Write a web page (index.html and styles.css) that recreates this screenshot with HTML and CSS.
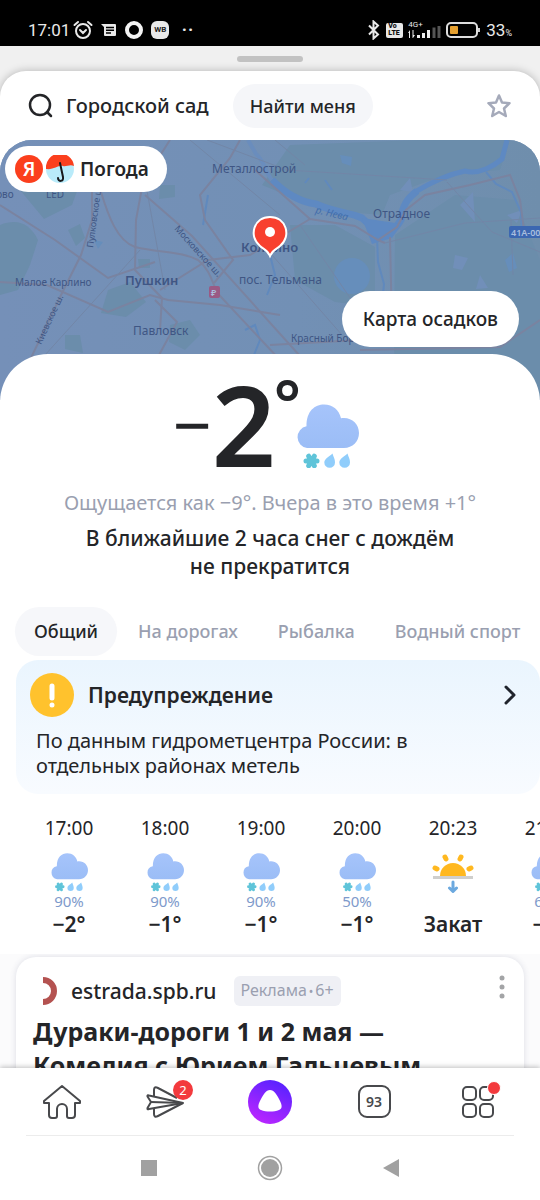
FILE: index.html
```html
<!DOCTYPE html>
<html lang="ru">
<head>
    <meta charset="UTF-8">
    <meta name="viewport" content="width=device-width, initial-scale=1.0">
    <title>Погода</title>
    <link rel="stylesheet" href="styles.css">
</head>
<body>
    <svg class="defs" aria-hidden="true">
        <defs>
            <linearGradient id="cloudFill" x1="0" y1="0" x2="0" y2="1">
                <stop offset="0" stop-color="#a6c4fb"/>
                <stop offset="1" stop-color="#9bbdf6"/>
            </linearGradient>
        </defs>
        <symbol id="sleet" viewBox="0 0 64 64">
            <path fill="url(#cloudFill)" d="M12 44A11 11 0 0 1 11.500 22.300C11.400 7 20 .600 29 .600C38 .600 44 6 46 14.200C56 12.500 64 19.500 64 29C64 37.500 57.500 44 49 44Z"/>
            <g stroke="#5fc4d9" stroke-width="5" stroke-linecap="round">
                <path d="M11 57H22M13.700 52.200L19.300 61.800M19.300 52.200L13.700 61.800"/>
            </g>
            <g fill="#90cdfb">
                <path d="M37.500 49.500C38.500 53 40 55 40 58.500A5.300 5.300 0 0 1 29.300 58.500C29.500 54.500 34 53 37.500 49.500Z"/>
                <path d="M52.500 49.500C53.500 53 55 55 55 58.500A5.300 5.300 0 0 1 44.300 58.500C44.500 54.500 49 53 52.500 49.500Z"/>
            </g>
        </symbol>
    </svg>

    <div class="app">
        <div class="status-bar">
            <div class="status-left">
                <span class="clock">17:01</span>
                <svg width="20" height="20" viewBox="0 0 20 20" fill="none" stroke="#e9e9e9" stroke-width="2" stroke-linecap="round">
                    <circle cx="10" cy="11" r="7"/>
                    <path d="M7 10l3 3 3-3M1.500 5L5 2M18.500 5L15 2"/>
                </svg>
                <svg width="16" height="16" viewBox="0 0 16 16">
                    <path fill="#e9e9e9" d="M0 2h14q1 0 1 1v10q0 1-1 1H4q-1 0-1-1V5z"/>
                    <path stroke="#000" stroke-width="1.500" d="M5 5.500h8M5 8.300h8M5 11h5"/>
                </svg>
                <svg width="18" height="18" viewBox="0 0 18 18"><circle cx="9" cy="9" r="7" fill="none" stroke="#f4f4f4" stroke-width="4"/></svg>
                <span class="wb">WB</span>
                <span class="more">··</span>
            </div>
            <div class="status-right">
                <svg width="14" height="20" viewBox="0 0 14 20" fill="none" stroke="#e9e9e9" stroke-width="2">
                    <path d="M2 5.500l9 9-4.500 4V1.500l4.500 4-9 9"/>
                </svg>
                <span class="volte">Vo<br>LTE</span>
                <div class="network">
                    <span>4G+</span>
                    <svg width="33" height="12" viewBox="0 0 33 12">
                        <path fill="#eee" d="M0 7l2-3v8H1V7zM4.500 4h1v5H7l-2 3h-.500zM9 9h3v3H9zM14 7h3v5h-3zM19 4h3v8h-3z"/>
                        <path fill="#555" d="M24.500 1.500h3V12h-3zM29.500 0h3v12h-3z"/>
                    </svg>
                </div>
                <svg width="35" height="16" viewBox="0 0 35 16">
                    <rect x="1" y="1" width="30" height="14" rx="4" fill="none" stroke="#ddd" stroke-width="2"/>
                    <rect x="4" y="4" width="8" height="8" rx="1" fill="#e6a02f"/>
                    <rect x="32" y="6" width="2" height="4" fill="#ccc"/>
                </svg>
                <span class="percent">33<small>%</small></span>
            </div>
        </div>

        <div class="handle"></div>

        <main class="sheet">
            <header class="search">
                <a class="place" href="#">
                    <svg width="26" height="26" viewBox="0 0 26 26" fill="none" stroke="#242528" stroke-width="2.500" stroke-linecap="round">
                        <circle cx="12" cy="12" r="10"/>
                        <path d="M19 19l4 4"/>
                    </svg>
                    Городской сад
                </a>
                <button class="find-me" type="button">Найти меня</button>
                <button class="favorite" type="button" aria-label="В избранное">
                    <svg width="26" height="26" viewBox="0 0 26 26" fill="none" stroke="#a5aaba" stroke-width="2.500" stroke-linejoin="round">
                        <path d="M13 2.500l3 7 7.500.700-5.500 5.300 1.800 7.500L13 19l-6.800 4L8 15.500 2.500 10.200 10 9.500z"/>
                    </svg>
                </button>
            </header>

            <section class="map">
                <svg class="map-canvas" viewBox="0 0 540 260" preserveAspectRatio="xMidYMin slice">
                    <defs>
                        <linearGradient id="mapShade" x1="0" y1="0" x2="1" y2="0">
                            <stop offset="0" stop-color="#7590b8"/>
                            <stop offset=".55" stop-color="#7290b5"/>
                            <stop offset="1" stop-color="#6f8eac"/>
                        </linearGradient>
                    </defs>
                    <rect width="540" height="260" fill="url(#mapShade)"/>
                    <g fill="#6b8dab">
                        <path d="M0 85C18 78 30 84 38 100L30 125 18 150 0 155z"/>
                        <path d="M20 50l35-15 25 8-8 22-28 14z"/>
                        <path d="M108 150l22-8 16 20-20 15-25-4z"/>
                        <path d="M170 185l20-5 10 15-15 15-16-8z"/>
                        <path d="M290 5l130-5 90 0-10 30-55 5-55 20-8 20-60-5-60-25z"/>
                        <path d="M395 95l60-40 60 5 25 60v140H400l-6-50z"/>
                        <path d="M290 85l45 0 40 22v60l-40-5-40-22z"/>
                        <path d="M68 90l12-6 5 14-9 8zM160 45l15 0 0 12-16 2zM65 195l15 0 3 18-18-4zM138 119l12 0 0 9-11 0z"/>
                    </g>
                    <g fill="#718fb9">
                        <path d="M455 115l13 3-6 12-9-2zM480 135l8 13-12 1zM460 65l13-13 2 30zM507 75l15-5-5 13zM400 50l10-12 3 14z"/>
                    </g>
                    <g fill="#668ebb">
                        <circle cx="352" cy="136" r="18"/>
                        <path d="M505 120l8-7 4 15-8 4zM340 15l12 2-1 9-9-3zM94 100l9 2-5 7z"/>
                    </g>
                    <!-- river -->
                    <path fill="none" stroke="#6a8dbd" stroke-width="4" d="M248 0L256 14C264 20 265 32 272 40"/>
                    <path fill="none" stroke="#5e89c2" stroke-width="7" stroke-linejoin="round" d="M272 40C285 53 300 62 316 64C335 73 350 72 362 78L378 93C388 96 397 87 401 80C402 65 408 58 417 51"/>
                    <path fill="none" stroke="#5e89c2" stroke-width="5" stroke-linejoin="round" d="M415 52C430 43 445 35 465 31C480 35 495 25 502 19L507 0"/>
                    <path fill="#5e89c2" d="M362 78L372 104 392 98 402 84z"/>
                    <g fill="none" stroke="#6089bd" stroke-width="2">
                        <path d="M377 97l1 25 6 22-2 20M486 32l10 12 16 8 9 20 1 25M270 115l5 20-8 20M245 190l10-5 5 15-6 15"/>
                        <path d="M325 40l7 10M305 43l4-5M203 85l5-30"/>
                    </g>
                    <g fill="none" stroke="#7a83a0" stroke-width="2">
                        <path d="M101 52C108 75 117 101 135 107C160 113 180 111 198 120C214 133 212 150 222 158L280 220"/>
                        <path d="M145 55L192 96L300 216"/>
                        <path d="M0 65L55 100L108 138L155 122"/>
                        <path d="M92 45L92 80L81 115L63 151L30 220"/>
                        <path d="M0 142L47 145L108 172L150 155L168 160L220 165L280 175"/>
                        <path d="M240 0L230 18L200 55L205 80L233 120L214 143"/>
                        <path d="M170 0L143 42L136 80L135 130L162 158L160 190"/>
                        <path d="M255 30L310 79L355 86L378 100L397 87L406 70L425 55L470 45L510 35L520 60L524 90"/>
                        <path d="M310 79L250 115L208 120L160 150M390 97L392 190M378 100L385 103"/>
                        <path d="M155 160l22 22-18 33M540 180l-40 27-140 3M270 205l90-5"/>
                    </g>
                    <g fill="none" stroke="#7286a7" stroke-width="1">
                        <path d="M145 40l20 110M190 0l90 75M207 0l80 30 160 10M385 103l80-20 75-5M447 42l45 50 48 20M300 85l55 80M45 215l95-105M275 0l30 25M511 80l2 55M272 115l70 80"/>
                    </g>
                    <g class="map-labels">
                        <text x="212" y="33" class="town">Металлострой</text>
                        <text x="373" y="78" class="town">Отрадное</text>
                        <text x="241" y="112" class="city">Колпино</text>
                        <text x="125" y="145" class="city">Пушкин</text>
                        <text x="239" y="144" class="town">пос. Тельмана</text>
                        <text x="15" y="146" class="village">Малое Карлино</text>
                        <text x="133" y="195" class="town">Павловск</text>
                        <text x="291" y="202" class="village">Красный Бор</text>
                        <text x="-10" y="58" class="village">ново</text>
                        <text x="46" y="58" class="village">LED</text>
                        <text class="road" transform="translate(93 108) rotate(-82)">Пулковское ш.</text>
                        <text class="road" transform="translate(41 205) rotate(-65)">Киевское ш.</text>
                        <text class="road" transform="translate(174 89) rotate(48)">Московское ш.</text>
                        <text class="river" transform="translate(315 73) rotate(13)">р. Нева</text>
                    </g>
                    <rect x="509" y="86" width="40" height="12" rx="2" fill="#3c67b1"/>
                    <text x="511" y="96" class="shield">41А-004</text>
                    <rect x="209" y="146" width="11" height="12" rx="2" fill="#9a5a85"/>
                    <text x="211" y="156" class="shield">₽</text>
                    <path fill="#f8402f" stroke="#fff" stroke-width="2" d="M270 116C267 109 263 109 260 106C248 96 254 77 270 77C286 77 292 96 280 106C277 109 273 109 270 116Z"/>
                    <circle cx="270" cy="92" r="5" fill="#fff"/>
                </svg>
                <a class="brand" href="#">
                    <span class="ya">Я</span>
                    <svg width="28" height="28" viewBox="0 0 28 28">
                        <circle cx="14" cy="14" r="14" fill="#b9ebfa"/>
                        <path fill="#fb3f1d" d="M0 14A14 14 0 0 1 28 11C24 9 20 12 17 11C12 10 8 15 0 14Z"/>
                        <path fill="none" stroke="#17191c" stroke-width="2" stroke-linecap="round" d="M14 8l3 14c1 5-5 5-5 1"/>
                    </svg>
                    Погода
                </a>
                <button class="rain-map" type="button">Карта осадков</button>
            </section>

            <section class="now">
                <div class="temp">
                    <span class="minus">−</span><span class="degrees">2</span><span class="ring">°</span>
                    <svg class="now-icon" width="64" height="64"><use href="#sleet"/></svg>
                </div>
                <p class="feels">Ощущается как −9°. Вчера в это время +1°</p>
                <p class="nowcast">В ближайшие 2 часа снег с дождём<br>не прекратится</p>

                <nav class="tabs">
                    <a class="tab active" href="#">Общий</a>
                    <a class="tab" href="#">На дорогах</a>
                    <a class="tab" href="#">Рыбалка</a>
                    <a class="tab" href="#">Водный спорт</a>
                </nav>

                <a class="warning" href="#">
                    <span class="warning-head">
                        <svg width="44" height="44" viewBox="0 0 44 44">
                            <circle cx="22" cy="22" r="22" fill="#ffc22d"/>
                            <path stroke="#fff" stroke-width="5" stroke-linecap="round" d="M22 13v12M22 32v.100"/>
                        </svg>
                        <strong>Предупреждение</strong>
                        <svg width="14" height="22" viewBox="0 0 14 22" fill="none" stroke="#20242c" stroke-width="3" stroke-linecap="round" stroke-linejoin="round">
                            <path d="M2 3l8 8-8 8"/>
                        </svg>
                    </span>
                    <span class="warning-text">По данным гидрометцентра России: в отдельных районах метель</span>
                </a>

                <ul class="hours">
                    <li><time>17:00</time><svg width="38" height="38"><use href="#sleet"/></svg><span class="chance">90%</span><b>−2°</b></li>
                    <li><time>18:00</time><svg width="38" height="38"><use href="#sleet"/></svg><span class="chance">90%</span><b>−1°</b></li>
                    <li><time>19:00</time><svg width="38" height="38"><use href="#sleet"/></svg><span class="chance">90%</span><b>−1°</b></li>
                    <li><time>20:00</time><svg width="38" height="38"><use href="#sleet"/></svg><span class="chance">50%</span><b>−1°</b></li>
                    <li>
                        <time>20:23</time>
                        <svg width="42" height="42" viewBox="0 0 42 42">
                            <path fill="#ffb81f" d="M8 25a13 13 0 0 1 26 0z"/>
                            <g stroke="#ffb81f" stroke-width="5" stroke-linecap="round">
                                <path d="M13 6l1 2M29 6l-1 2M3 17l2 1M39 17l-2 1"/>
                            </g>
                            <path stroke="#cfcfcd" stroke-width="3" d="M1 26.500h40"/>
                            <path fill="none" stroke="#6ca9df" stroke-width="3" stroke-linecap="round" stroke-linejoin="round" d="M21 31v9M17.500 37l3.500 3.500 3.500-3.500"/>
                        </svg>
                        <span class="chance"></span>
                        <b>Закат</b>
                    </li>
                    <li><time>21:00</time><svg width="38" height="38"><use href="#sleet"/></svg><span class="chance">60%</span><b>−1°</b></li>
                </ul>
            </section>

            <section class="feed">
                <article class="ad">
                    <div class="ad-head">
                        <svg width="28" height="28" viewBox="0 0 28 28"><path fill="none" stroke="#b45250" stroke-width="6" d="M10 3a11 11 0 0 1 0 22"/></svg>
                        <a class="site" href="#">estrada.spb.ru</a>
                        <span class="label">Реклама<i>•</i>6+</span>
                        <button class="menu" type="button" aria-label="Меню">
                            <svg width="6" height="24" viewBox="0 0 6 24" fill="#a3a4a6"><circle cx="3" cy="3" r="2.500"/><circle cx="3" cy="12" r="2.500"/><circle cx="3" cy="21" r="2.500"/></svg>
                        </button>
                    </div>
                    <h2>Дураки-дороги 1 и 2 мая —<br>Комедия с Юрием Гальцевым</h2>
                </article>
            </section>
        </main>

        <footer class="bottom">
            <nav class="browser-nav">
                <a href="#" aria-label="Домой">
                    <svg width="40" height="36" viewBox="0 0 40 36" fill="none" stroke="#48494c" stroke-width="2" stroke-linejoin="round">
                        <path d="M20 2L2 17v2h5v12q0 3 3 3h3q2 0 2-2v-7a5 5 0 0 1 10 0v7q0 2 2 2h3q3 0 3-3V19h5v-2z"/>
                    </svg>
                </a>
                <a class="with-badge" href="#" aria-label="Письма">
                    <svg width="40" height="36" viewBox="0 0 40 36" fill="none" stroke="#48494c" stroke-width="2" stroke-linejoin="round">
                        <path d="M3 11.500q-2-1-1.500 1L5 18l-3.500 6q-.500 2 1.500 1L37 19z"/>
                        <path d="M5 18l32 1M8 12V6q0-4 4-2l19 10M8 25v5q0 4 4 2l25-13"/>
                    </svg>
                    <span class="badge">2</span>
                </a>
                <a href="#" aria-label="Алиса">
                    <svg width="44" height="44" viewBox="0 0 44 44">
                        <defs>
                            <linearGradient id="alice" x1=".800" y1="0" x2=".300" y2="1">
                                <stop offset="0" stop-color="#5322ff"/>
                                <stop offset="1" stop-color="#bb26ff"/>
                            </linearGradient>
                        </defs>
                        <circle cx="22" cy="22" r="22" fill="url(#alice)"/>
                        <path fill="#fff" d="M22 10C26 10 29 15 31 19C35 26 34 29 31 30C26 32 18 32 13 30C10 29 9 26 13 19C15 15 18 10 22 10Z"/>
                    </svg>
                </a>
                <a class="tab-count" href="#">93</a>
                <a class="with-badge" href="#" aria-label="Сервисы">
                    <svg width="32" height="32" viewBox="0 0 32 32" fill="none" stroke="#48494c" stroke-width="2">
                        <rect x="1" y="1" width="13" height="13" rx="4"/>
                        <rect x="18" y="1" width="13" height="13" rx="4"/>
                        <rect x="1" y="18" width="13" height="13" rx="4"/>
                        <rect x="18" y="18" width="13" height="13" rx="4"/>
                    </svg>
                    <span class="dot"></span>
                </a>
            </nav>
            <div class="system-nav">
                <svg width="16" height="16" viewBox="0 0 16 16"><rect width="16" height="16" fill="#a1a1a1"/></svg>
                <svg width="26" height="26" viewBox="0 0 26 26"><circle cx="13" cy="13" r="9" fill="#a1a1a1"/><circle cx="13" cy="13" r="11.500" fill="none" stroke="#a1a1a1" stroke-width="1.500"/></svg>
                <svg width="16" height="18" viewBox="0 0 16 18"><path fill="#a1a1a1" d="M16 0v18L0 9z"/></svg>
            </div>
        </footer>
    </div>
</body>
</html>
```

FILE: styles.css
```css
* {
    box-sizing: border-box;
}
body {
    margin: 0;
    font-family: "Noto Sans", "Open Sans", sans-serif;
    color: #242528;
    background: #fff;
}
a {
    color: inherit;
    text-decoration: none;
}
button {
    font: inherit;
    color: inherit;
    border: none;
    background: none;
    padding: 0;
    cursor: pointer;
}
svg {
    display: block;
    flex: none;
}
.defs {
    position: absolute;
    width: 0;
    height: 0;
}
.app {
    height: 100vh;
    display: flex;
    flex-direction: column;
    overflow: hidden;
    background: #f0f0f0;
}

/* status bar */
.status-bar {
    flex: none;
    display: flex;
    justify-content: space-between;
    height: 46px;
    padding: 14px 28px 0;
    background: #000;
    color: #e9e9e9;
    font-family: Roboto, sans-serif;
}
.status-left, .status-right {
    display: flex;
    align-items: center;
    height: 32px;
}
.status-left {
    gap: 8px;
}
.status-right {
    gap: 5px;
}
.clock {
    font-size: 17px;
    margin-right: -5px;
}
.wb {
    width: 18px;
    height: 18px;
    border-radius: 6px;
    background: #e9e9e9;
    color: #222;
    font-size: 8px;
    font-weight: 700;
    line-height: 18px;
    text-align: center;
}
.more {
    margin-left: 4px;
    font-size: 24px;
    line-height: 18px;
}
.volte {
    width: 17px;
    height: 15px;
    border-radius: 2px;
    background: #e9e9e9;
    color: #111;
    font-size: 7px;
    font-weight: 900;
    line-height: 7px;
    padding-left: 2px;
}
.network {
    padding-bottom: 2px;
    font-size: 8px;
    line-height: 8px;
}
.network svg {
    margin-top: -3px;
}
.percent {
    font-size: 17px;
}
.percent small {
    font-size: 9px;
}

.handle {
    flex: none;
    width: 66px;
    height: 6px;
    margin: 10px auto 9px;
    border-radius: 3px;
    background: #c2c2c2;
}

/* page */
.sheet {
    flex: 1;
    min-height: 0;
    overflow: hidden;
    background: #fff;
    border-radius: 26px 26px 0 0;
    box-shadow: 0 0 8px rgba(0, 0, 0, 0.25);
}
.search {
    display: flex;
    align-items: center;
    height: 69px;
    padding: 0 28px;
}
.place {
    display: flex;
    align-items: center;
    gap: 12px;
    font-size: 20px;
    font-weight: 500;
}
.find-me {
    height: 44px;
    margin-left: 24px;
    padding: 0 17px;
    border-radius: 22px;
    background: #f5f6f9;
    font-size: 18px;
    font-weight: 500;
}
.favorite {
    margin-left: auto;
}

/* map */
.map {
    position: relative;
    height: 260px;
    overflow: hidden;
    border-radius: 32px 32px 0 0;
    background: #7290b3;
}
.map-canvas {
    width: 100%;
    height: 100%;
}
.map-labels {
    fill: #3f5684;
}
.town {
    font-size: 12px;
}
.city {
    font-size: 13px;
    font-weight: 600;
}
.village {
    font-size: 10px;
}
.road {
    font-size: 9px;
}
.river {
    font-size: 10px;
    font-style: italic;
    fill: #426eac;
}
.shield {
    font-size: 9px;
    font-weight: 600;
    fill: #a9bede;
}
.brand {
    position: absolute;
    top: 6px;
    left: 5px;
    display: flex;
    align-items: center;
    gap: 3px;
    height: 46px;
    padding: 0 18px 0 10px;
    border-radius: 23px;
    background: #fff;
    font-size: 19px;
    font-weight: 600;
}
.brand svg {
    margin-right: 3px;
}
.ya {
    width: 28px;
    height: 28px;
    border-radius: 50%;
    background: #fb3f1d;
    color: #fff;
    line-height: 28px;
    text-align: center;
}
.rain-map {
    position: absolute;
    top: 151px;
    right: 21px;
    height: 56px;
    padding: 0 21px;
    border-radius: 28px;
    background: #fff;
    font-size: 19px;
    font-weight: 500;
}

/* current weather */
.now {
    position: relative;
    margin-top: -46px;
    background: #fff;
    border-radius: 48px 48px 0 0;
    text-align: center;
}
.temp {
    display: flex;
    justify-content: center;
    height: 132px;
    padding: 14px 8px 0 0;
}
.minus, .degrees {
    line-height: 112px;
}
.minus {
    font-size: 68px;
    font-weight: 400;
}
.degrees {
    font-size: 112px;
    font-weight: 600;
}
.ring {
    margin-left: -2px;
    font-size: 64px;
    font-weight: 600;
    line-height: 68px;
}
.now-icon {
    margin: 36px 0 0 -6px;
}
.feels, .nowcast {
    margin: 0;
}
.feels {
    font-size: 20px;
    line-height: 34px;
    color: #9a9fb0;
}
.nowcast {
    padding-top: 4px;
    font-size: 21px;
    font-weight: 500;
    line-height: 28px;
}
.tabs {
    display: flex;
    gap: 2px;
    margin-top: 27px;
    padding-left: 15px;
    overflow: hidden;
}
.tab {
    flex: none;
    height: 49px;
    padding: 0 19px;
    border-radius: 25px;
    font-size: 18px;
    font-weight: 500;
    line-height: 49px;
    color: #9a9fb0;
}
.tab.active {
    background: #f6f7fa;
    color: #242528;
}
.warning {
    display: block;
    margin: 4px 0 0 16px;
    padding: 13px 22px 16px 14px;
    border-radius: 22px;
    background: linear-gradient(#eaf5fe, #f8fbff);
    text-align: left;
}
.warning-head {
    display: flex;
    align-items: center;
    gap: 14px;
}
.warning-head strong {
    flex: 1;
    font-size: 21px;
    font-weight: 600;
}
.warning-text {
    display: block;
    max-width: 420px;
    padding: 11px 0 0 6px;
    font-size: 20px;
    line-height: 25px;
}
.hours {
    display: flex;
    margin: 0;
    padding: 19px 0 15px 21px;
    list-style: none;
    overflow: hidden;
}
.hours li {
    flex: none;
    display: flex;
    flex-direction: column;
    align-items: center;
    width: 96px;
}
.hours time {
    font-size: 19px;
    line-height: 30px;
    margin-bottom: 8px;
}
.hours svg {
    height: 42px;
}
.chance {
    height: 16px;
    font-size: 15px;
    line-height: 16px;
    color: #7e9acb;
}
.hours b {
    font-size: 21px;
    font-weight: 600;
    line-height: 30px;
}

/* feed */
.feed {
    padding: 3px 16px 0;
    background: #fbfbfc;
}
.ad {
    padding: 11px 17px;
    border-radius: 20px;
    background: #fff;
    box-shadow: 0 0 6px rgba(60, 70, 110, 0.16);
}
.ad-head {
    display: flex;
    align-items: center;
    height: 46px;
}
.site {
    margin: 0 17px 0 10px;
    font-size: 21px;
    font-weight: 500;
}
.label {
    padding: 0 7px;
    border-radius: 6px;
    background: #eff0f5;
    font-size: 16px;
    line-height: 28px;
    color: #9a9fb0;
}
.label i {
    margin: 0 2px;
    font-size: 12px;
    font-style: normal;
}
.menu {
    align-self: flex-start;
    margin: 7px 2px 0 auto;
}
.ad h2 {
    margin: 0;
    font-size: 25px;
    font-weight: 700;
    line-height: 34px;
}

/* bottom bars */
.bottom {
    flex: none;
    position: relative;
    padding: 0 26px;
    background: #fff;
    box-shadow: 0 -1px 5px rgba(0, 0, 0, 0.25);
}
.browser-nav {
    display: grid;
    grid-template-columns: repeat(5, 1fr);
    justify-items: center;
    align-items: center;
    height: 67px;
    margin: 0 -16px;
}
.with-badge {
    position: relative;
}
.badge {
    position: absolute;
    top: -4px;
    right: -7px;
    width: 20px;
    height: 20px;
    border-radius: 50%;
    background: #f33a3d;
    color: #fff;
    font-size: 13px;
    line-height: 20px;
    text-align: center;
}
.dot {
    position: absolute;
    top: -5px;
    right: -7px;
    width: 14px;
    height: 14px;
    border: 1px solid #fff;
    border-radius: 50%;
    background: #f33a3d;
}
.tab-count {
    width: 33px;
    height: 33px;
    border: 2px solid #48494c;
    border-radius: 9px;
    font-size: 14px;
    font-weight: 600;
    line-height: 29px;
    text-align: center;
    color: #48494c;
}
.system-nav {
    display: flex;
    justify-content: center;
    align-items: center;
    gap: 100px;
    height: 65px;
    border-top: 1px solid #ececec;
}
```
